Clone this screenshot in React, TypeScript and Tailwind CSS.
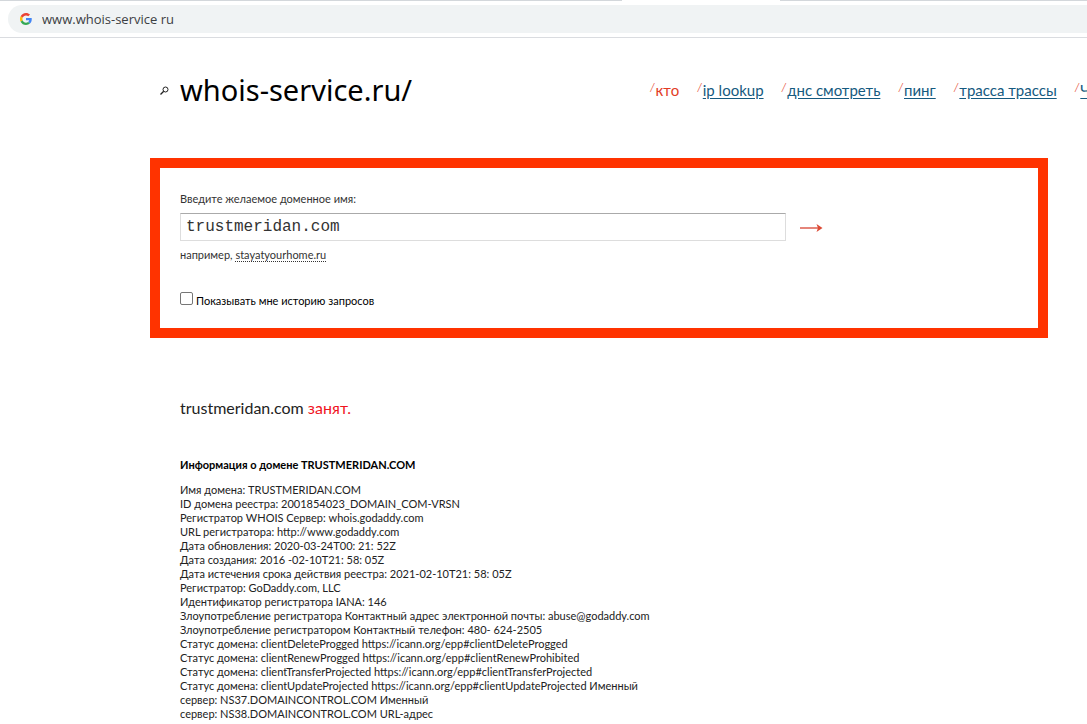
import { useState } from 'react';

const navItems = ['кто', 'ip lookup', 'днс смотреть', 'пинг', 'трасса трассы', 'Что'];

const whoisLines = [
  'Имя домена: TRUSTMERIDAN.COM',
  'ID домена реестра: 2001854023_DOMAIN_COM-VRSN',
  'Регистратор WHOIS Сервер: whois.godaddy.com',
  'URL регистратора: http://www.godaddy.com',
  'Дата обновления: 2020-03-24T00: 21: 52Z',
  'Дата создания: 2016 -02-10T21: 58: 05Z',
  'Дата истечения срока действия реестра: 2021-02-10T21: 58: 05Z',
  'Регистратор: GoDaddy.com, LLC',
  'Идентификатор регистратора IANA: 146',
  'Злоупотребление регистратора Контактный адрес электронной почты: abuse@godaddy.com',
  'Злоупотребление регистратором Контактный телефон: 480- 624-2505',
  'Статус домена: clientDeleteProgged https://icann.org/epp#clientDeleteProgged',
  'Статус домена: clientRenewProgged https://icann.org/epp#clientRenewProhibited',
  'Статус домена: clientTransferProjected https://icann.org/epp#clientTransferProjected',
  'Статус домена: clientUpdateProjected https://icann.org/epp#clientUpdateProjected Именный',
  'сервер: NS37.DOMAINCONTROL.COM Именный',
  'сервер: NS38.DOMAINCONTROL.COM URL-адрес',
];

function GoogleIcon() {
  return (
    <svg viewBox="0 0 48 48" className="h-3 w-3 shrink-0" aria-hidden="true">
      <path fill="#ea4335" d="M24 9.5c3.5 0 6.7 1.2 9.2 3.6l6.9-6.9C35.9 2.4 30.5 0 24 0 14.6 0 6.5 5.4 2.6 13.2l8 6.2C12.4 13.7 17.7 9.5 24 9.5z" />
      <path fill="#4285f4" d="M47 24.5c0-1.6-.2-3.1-.4-4.5H24v9h12.9c-.6 3-2.3 5.5-4.7 7.2l7.7 6C44.4 38 47 31.8 47 24.5z" />
      <path fill="#fbbc05" d="M10.5 28.6c-.5-1.5-.8-3-.8-4.6s.3-3.1.8-4.6l-8-6.2C.9 16.5 0 20.1 0 24s.9 7.5 2.6 10.8z" />
      <path fill="#34a853" d="M24 48c6.5 0 11.9-2.1 15.9-5.8l-7.7-6c-2.2 1.5-4.9 2.3-8.2 2.3-6.3 0-11.6-4.2-13.5-9.9l-8 6.2C6.5 42.6 14.6 48 24 48z" />
    </svg>
  );
}

function AddressBar() {
  const [url, setUrl] = useState('www.whois-service ru');

  return (
    <div className="border-b border-[#dadce0] bg-white">
      <div className="flex h-px">
        <div className="w-[622px] bg-[#d3d7db]" />
        <div className="w-[158px]" />
        <div className="flex-1 bg-[#d3d7db]" />
      </div>
      <div className="mt-1 mb-1 ml-2 flex h-7 items-center gap-[10px] rounded-l-full bg-[#f0f3f4] pl-3">
        <GoogleIcon />
        <input
          type="text"
          aria-label="Address"
          value={url}
          onChange={(e) => setUrl(e.target.value)}
          className="min-w-0 flex-1 bg-transparent font-['Open_Sans',sans-serif] text-[13px] leading-5 text-[#3c4043] outline-none"
        />
      </div>
    </div>
  );
}

function Header() {
  return (
    <header className="flex h-[120px] items-center pb-4 pl-[160px] whitespace-nowrap">
      <svg viewBox="0 0 9 9" className="mr-[11px] h-[9px] w-[9px] shrink-0" fill="none" stroke="#222" aria-hidden="true">
        <circle cx="5.5" cy="3.5" r="2.5" />
        <path d="M3.7 5.3L.5 8.5" strokeWidth="1.3" />
      </svg>
      <h1 className="w-[470px] shrink-0 font-['Noto_Sans',sans-serif] text-[29px] leading-9 text-black">
        whois-service.ru/
      </h1>
      <nav className="flex gap-[18px] text-[15px] leading-5">
        {navItems.map((item, i) => (
          <span key={item} className="flex items-start gap-px">
            <span className="text-[11px] leading-[14px] text-[#e8604a] italic">/</span>
            {i === 0 ? (
              <span className="text-[#e23b25]">{item}</span>
            ) : (
              <a href="#" className="text-[#155a80] underline underline-offset-2">
                {item}
              </a>
            )}
          </span>
        ))}
      </nav>
    </header>
  );
}

function SearchForm() {
  const [domain, setDomain] = useState('trustmeridan.com');

  return (
    <form
      onSubmit={(e) => e.preventDefault()}
      className="mr-[39px] ml-[150px] border-10 border-[#ff3300] px-5 pt-6 pb-5 text-[11px] leading-[14px] text-[#333]"
    >
      <label htmlFor="domain" className="block">
        Введите желаемое доменное имя:
      </label>
      <div className="mt-[7px] flex items-center gap-[14px]">
        <input
          id="domain"
          type="text"
          value={domain}
          onChange={(e) => setDomain(e.target.value)}
          className="h-7 w-[606px] border border-[#ddd] border-t-[#aaa] px-[5px] font-['Liberation_Mono',monospace] text-base text-[#333] outline-none"
        />
        <button type="submit" aria-label="Search" className="cursor-pointer">
          <svg viewBox="0 0 23 10" className="h-[10px] w-[23px]" aria-hidden="true">
            <path d="M0 6h18" stroke="#e5857a" strokeWidth="2" />
            <path d="M16.5 2L22.5 6l-6 4L18 6z" fill="#dc4a34" />
          </svg>
        </button>
      </div>
      <p className="mt-[7px]">
        например,{' '}
        <a href="#" className="underline decoration-dotted underline-offset-2">
          stayatyourhome.ru
        </a>
      </p>
      <label className="mt-[30px] flex items-end gap-[3px] text-black">
        <input
          type="checkbox"
          className="mb-[3px] h-[13px] w-[13px] appearance-none rounded-[2px] border border-[#767676] bg-white checked:bg-[#155a80]"
        />
        Показывать мне историю запросов
      </label>
    </form>
  );
}

function Result() {
  return (
    <section className="pt-[60px] pl-[180px] text-[11px] leading-[14px] text-[#222]">
      <p className="text-base leading-5">
        trustmeridan.com <span className="text-[#f0141e]">занят.</span>
      </p>
      <h2 className="mt-10 font-bold text-black">Информация о домене TRUSTMERIDAN.COM</h2>
      <div className="mt-[11px] whitespace-nowrap">
        {whoisLines.map((line) => (
          <p key={line}>{line}</p>
        ))}
      </div>
    </section>
  );
}

export default function App() {
  return (
    <div className="min-h-screen overflow-hidden bg-white font-['Trebuchet_MS','Lato',sans-serif]">
      <AddressBar />
      <Header />
      <main>
        <SearchForm />
        <Result />
      </main>
    </div>
  );
}
